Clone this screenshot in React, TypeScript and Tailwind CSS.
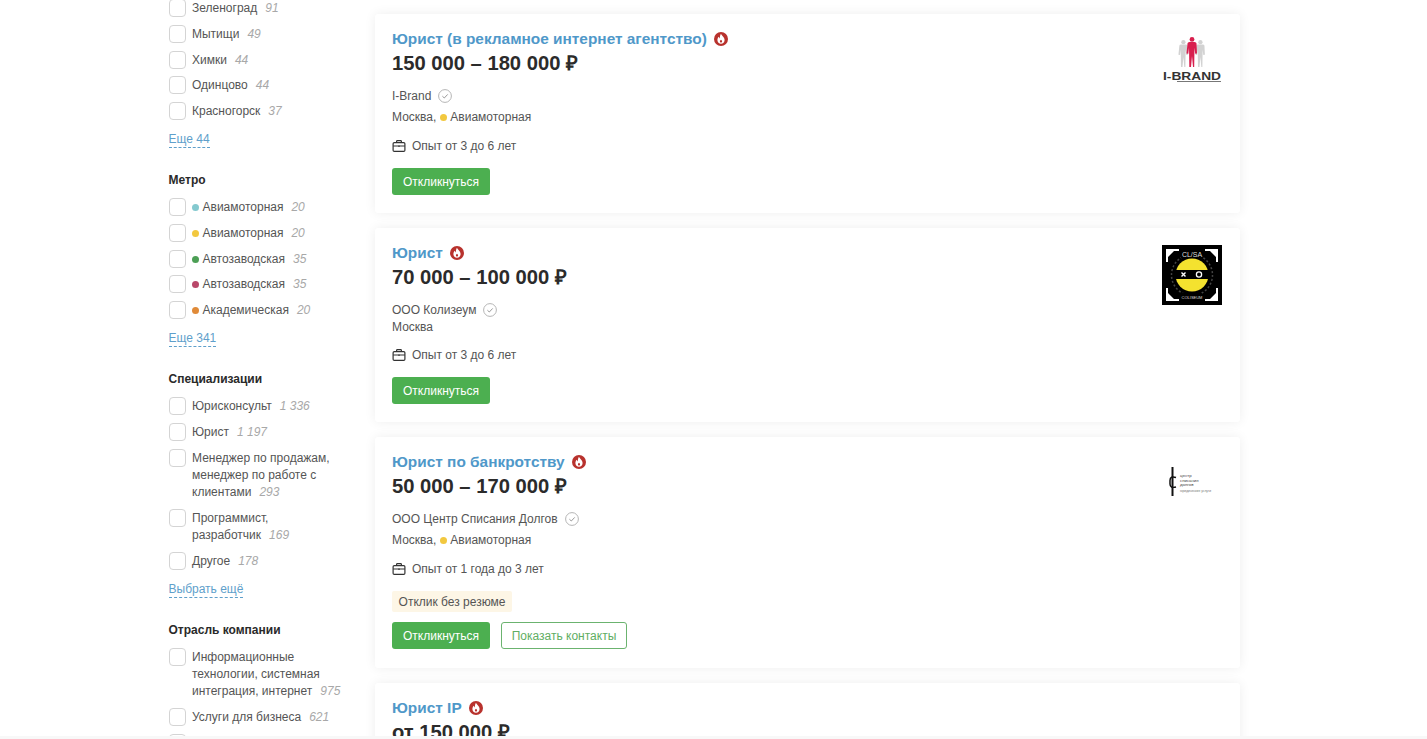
type Row = { label: string; count: string; dot?: string };

const font = { fontFamily: '"Liberation Sans", Arial, sans-serif' };

const cities: Row[] = [
  { label: "Зеленоград", count: "91" },
  { label: "Мытищи", count: "49" },
  { label: "Химки", count: "44" },
  { label: "Одинцово", count: "44" },
  { label: "Красногорск", count: "37" },
];

const metro: Row[] = [
  { label: "Авиамоторная", count: "20", dot: "bg-[#84c9cf]" },
  { label: "Авиамоторная", count: "20", dot: "bg-[#f2c83f]" },
  { label: "Автозаводская", count: "35", dot: "bg-[#4c9f55]" },
  { label: "Автозаводская", count: "35", dot: "bg-[#b9486a]" },
  { label: "Академическая", count: "20", dot: "bg-[#e08a38]" },
];

const specs: Row[] = [
  { label: "Юрисконсульт", count: "1 336" },
  { label: "Юрист", count: "1 197" },
  { label: "Менеджер по продажам, менеджер по работе с клиентами", count: "293" },
  { label: "Программист, разработчик", count: "169" },
  { label: "Другое", count: "178" },
];

const industries: Row[] = [
  { label: "Информационные технологии, системная интеграция, интернет", count: "975" },
  { label: "Услуги для бизнеса", count: "621" },
  { label: "", count: "" },
];

function FilterList({ rows }: { rows: Row[] }) {
  return (
    <div className="flex flex-col gap-[8.5px]">
      {rows.map((r, i) => (
        <label key={i} className="flex gap-[6px] text-[12px] leading-[17.25px] text-[#555]">
          <span className="-mt-[1px] h-[18px] w-[17.5px] shrink-0 rounded-[4px] border border-[#d4d4d4] bg-white" />
          <span className="min-w-0 flex-1">
            {r.dot && <span className={`mr-[3.5px] inline-block h-[7px] w-[7px] rounded-full align-[0px] ${r.dot}`} />}
            {r.label}
            {r.count && <i className="ml-[8px] text-[#a8a8a8]">{r.count}</i>}
          </span>
        </label>
      ))}
    </div>
  );
}

function MoreLink({ children }: { children: string }) {
  return (
    <div className="mt-[10.75px] h-[17.25px] text-[12px] leading-[17px] text-[#5f9fcb]">
      <span className="inline-block h-[17px] border-b border-dashed border-[#5f9fcb]">{children}</span>
    </div>
  );
}

function Heading({ children }: { children: string }) {
  return <div className="mt-[23.75px] mb-[9.75px] text-[12px] leading-[17.25px] font-bold text-[#2a2a2a]">{children}</div>;
}

function Fire() {
  return (
    <svg width="14" height="14" viewBox="0 0 14 14" className="shrink-0">
      <circle cx="7" cy="7" r="7" fill="#b8322d" />
      <path
        d="M7 1.8c.5 1.800 3.600 3.200 3.600 6.200 0 2.200-1.600 3.800-3.600 3.800S3.400 10.200 3.400 8c0-1.500.7-2.500 1.500-3.200.1.800.4 1.300.9 1.600C5.800 4.800 6.100 3 7 1.800zM7 7.800c-.7.600-1.100 1-1.100 1.600 0 .6.500 1 1.100 1s1.100-.4 1.100-1c0-.6-.4-1-1.100-1.600z"
        fill="#fff"
        fillRule="evenodd"
      />
    </svg>
  );
}

function Verified() {
  return (
    <svg width="14" height="14" viewBox="0 0 14 14" fill="none" className="ml-[7px] shrink-0">
      <circle cx="7" cy="7" r="6.4" stroke="#b5b5b5" />
      <path d="M4.4 7.2l1.900 1.800 3.400-3.600" stroke="#9a9a9a" />
    </svg>
  );
}

function Case() {
  return (
    <svg width="14" height="14" viewBox="0 0 14 14" fill="none" stroke="#333" strokeWidth="1.2" className="shrink-0">
      <rect x="1.100" y="3.600" width="11.800" height="8.800" rx="1.200" />
      <path d="M4.600 3.600V2.400q0-.8.8-.8h3.200q.8 0 .8.8v1.200M1.100 7h11.800M7 6.200v1.800" />
    </svg>
  );
}

function Person({ x, y, fill, s }: { x: number; y: number; fill: string; s: number }) {
  return (
    <g transform={`translate(${x} ${y}) scale(${s})`} fill={fill}>
      <circle cx="6" cy="2.400" r="2.400" />
      <path d="M1.500 6.500q0-1.500 2-1.500h5q2 0 2 1.500l.5 10-1.800.3-.7-6-.3 19.200H7l-1-11-1 11H3.300L3 10.800l-.7 6-1.800-.3z" />
    </g>
  );
}

function IBrandLogo() {
  return (
    <svg width="60" height="60" viewBox="0 0 60 60">
      <Person x={16} y={9} fill="#d2d2d2" s={0.9} />
      <Person x={33} y={9} fill="#d2d2d2" s={0.9} />
      <Person x={24} y={6} fill="#d81f4e" s={1} />
      <text x="30" y="48.500" textAnchor="middle" fontSize="11" fontWeight="700" fill="#333" style={font} textLength="58" lengthAdjust="spacingAndGlyphs">
        I-BRAND
      </text>
      <rect x="15" y="50" width="44" height="1" fill="#777" />
    </svg>
  );
}

function XoLogo() {
  return (
    <svg width="60" height="60" viewBox="0 0 60 60">
      <rect width="60" height="60" fill="#000" />
      <path d="M5 17V5h12M43 5h12v12M55 43v12H43M17 55H5V43" stroke="#fff" strokeWidth="2" fill="none" />
      <path d="M6 6h6l-6 6zM54 6h-6l6 6zM54 54h-6l6-6zM6 54h6l-6-6z" fill="#fff" />
      <circle cx="30" cy="30" r="20.500" fill="none" stroke="#444" strokeWidth="1.500" strokeDasharray="2 2" />
      <rect x="19" y="5" width="22" height="8" fill="#000" />
      <text x="30" y="11.500" textAnchor="middle" fontSize="7" fill="#ddd" style={font}>
        CL/SA
      </text>
      <circle cx="30" cy="30" r="16.500" fill="#f4e22f" />
      <rect x="13" y="25" width="34" height="9" fill="#000" />
      <path d="M19.500 27.500l4 4M23.500 27.500l-4 4" stroke="#fff" strokeWidth="1.400" />
      <circle cx="37" cy="29.500" r="2.600" fill="none" stroke="#fff" strokeWidth="1.300" />
      <rect x="20" y="48" width="20" height="8" fill="#000" />
      <text x="30" y="54" textAnchor="middle" fontSize="4" fill="#ddd" style={font}>
        COLISEUM
      </text>
    </svg>
  );
}

function DebtLogo() {
  return (
    <svg width="60" height="60" viewBox="0 0 60 60">
      <path d="M10.500 13v29" stroke="#111" strokeWidth="2" />
      <path d="M14 23.500q-6-2-6 3v3.500q0 4.500 6 3" stroke="#111" strokeWidth="1.500" fill="none" />
      <text x="18" y="23" fontSize="4.300" fill="#444" style={font}>центр</text>
      <text x="18" y="27.500" fontSize="4.300" fill="#444" style={font}>списания</text>
      <text x="18" y="32" fontSize="4.300" fill="#444" style={font}>долгов</text>
      <text x="18" y="37.500" fontSize="3.300" fill="#777" style={font}>юридические услуги</text>
    </svg>
  );
}

type Job = {
  title: string;
  salary: string;
  company: string;
  city: string;
  station?: string;
  experience: string;
  logo: React.ReactNode;
  extra?: boolean;
};

const jobs: Job[] = [
  {
    title: "Юрист (в рекламное интернет агентство)",
    salary: "150 000 – 180 000 ₽",
    company: "I-Brand",
    city: "Москва,",
    station: "Авиамоторная",
    experience: "Опыт от 3 до 6 лет",
    logo: <IBrandLogo />,
  },
  {
    title: "Юрист",
    salary: "70 000 – 100 000 ₽",
    company: "ООО Колизеум",
    city: "Москва",
    experience: "Опыт от 3 до 6 лет",
    logo: <XoLogo />,
  },
  {
    title: "Юрист по банкротству",
    salary: "50 000 – 170 000 ₽",
    company: "ООО Центр Списания Долгов",
    city: "Москва,",
    station: "Авиамоторная",
    experience: "Опыт от 1 года до 3 лет",
    logo: <DebtLogo />,
    extra: true,
  },
];

function JobCard({ job }: { job: Job }) {
  return (
    <div className="flex justify-between rounded-[3px] bg-white pt-[16px] pr-[18px] pb-[18px] pl-[17.5px] shadow-[0_0_12px_rgba(0,0,0,0.07)]">
      <div>
        <div className="flex h-[18px] items-center gap-[7px]">
          <span className="text-[15.4px] leading-[18px] font-bold text-[#4f98c9]">{job.title}</span>
          <Fire />
        </div>
        <div className="mt-[1px] text-[20.2px] leading-[28px] font-bold text-[#2b2b2b]">{job.salary}</div>
        <div className="mt-[10px] flex h-[17px] items-center text-[12px] text-[#555]">
          {job.company}
          <Verified />
        </div>
        {job.station ? (
          <div className="mt-[3px] flex h-[20px] items-center text-[12px] text-[#555]">
            {job.city}
            <span className="mr-[3px] ml-[4px] h-[7px] w-[7px] rounded-full bg-[#f2c83f]" />
            {job.station}
          </div>
        ) : (
          <div className="flex h-[18px] items-center text-[12px] text-[#555]">{job.city}</div>
        )}
        <div className="mt-[9.5px] flex h-[18px] items-center gap-[6px] text-[12px] text-[#555]">
          <Case />
          {job.experience}
        </div>
        {job.extra && (
          <div className="mt-[13.5px] flex h-[21px] w-[120px] items-center justify-center rounded-[2px] bg-[#fdf6e6] text-[12px] text-[#555]">
            Отклик без резюме
          </div>
        )}
        <div className={`flex gap-[11px] ${job.extra ? "mt-[10px] mb-[1px]" : "mt-[13.5px]"}`}>
          <button className="h-[27px] w-[98px] rounded-[3px] bg-[#4caf50] text-[12px] text-white">Откликнуться</button>
          {job.extra && (
            <button className="h-[27px] w-[126px] rounded-[3px] border border-[#6bb36f] bg-white text-[12px] text-[#5fae63]">
              Показать контакты
            </button>
          )}
        </div>
      </div>
      <div className="mt-[1px] h-[60px] w-[60px] shrink-0">{job.logo}</div>
    </div>
  );
}

export default function App() {
  return (
    <div className="relative h-[739px] overflow-hidden bg-white" style={font}>
      <div className="ml-[168.5px] flex">
        <aside className="mr-[33px] w-[173px] shrink-0">
          <FilterList rows={cities} />
          <MoreLink>Еще 44</MoreLink>
          <Heading>Метро</Heading>
          <FilterList rows={metro} />
          <MoreLink>Еще 341</MoreLink>
          <Heading>Специализации</Heading>
          <FilterList rows={specs} />
          <MoreLink>Выбрать ещё</MoreLink>
          <Heading>Отрасль компании</Heading>
          <FilterList rows={industries} />
        </aside>
        <main className="flex w-[865px] shrink-0 flex-col gap-[15px] pt-[14px]">
          {jobs.map((job) => (
            <JobCard key={job.title} job={job} />
          ))}
          <div className="rounded-[3px] bg-white pt-[16px] pl-[17.5px] shadow-[0_0_12px_rgba(0,0,0,0.07)]">
            <div className="flex h-[18px] items-center gap-[7px]">
              <span className="text-[15.4px] leading-[18px] font-bold text-[#4f98c9]">Юрист IP</span>
              <Fire />
            </div>
            <div className="mt-[1px] text-[20.2px] leading-[28px] font-bold text-[#2b2b2b]">от 150 000 ₽</div>
            <div className="h-[100px]" />
          </div>
        </main>
      </div>
      <div className="absolute inset-x-0 bottom-0 h-[3px] bg-[#f8f8f8]" />
    </div>
  );
}
